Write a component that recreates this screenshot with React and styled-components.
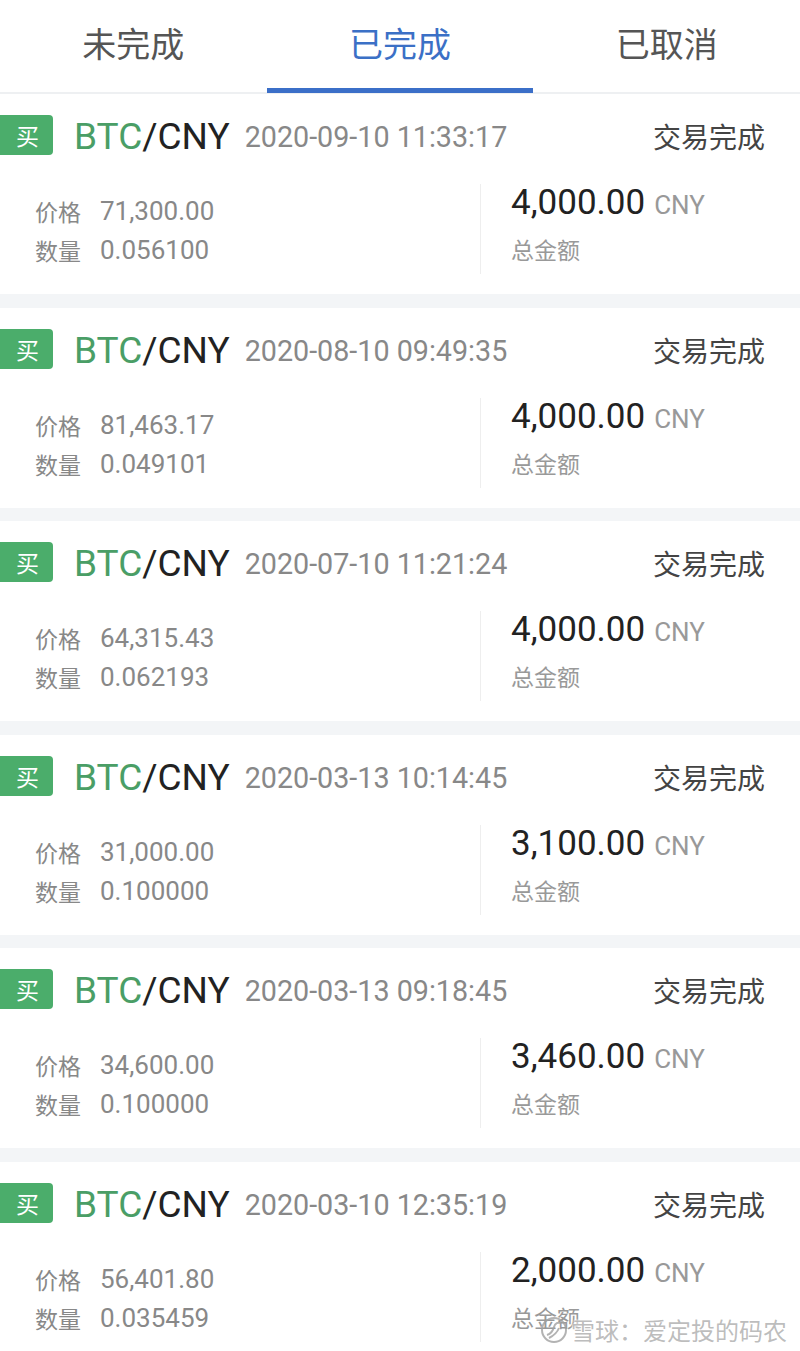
import React from "react";
import styled, { createGlobalStyle } from "styled-components";

const Global = createGlobalStyle`
  html, body { margin: 0; padding: 0; background: #ffffff; }
  body { font-family: Roboto, "Noto Sans CJK SC", sans-serif; }
  * { box-sizing: border-box; }
`;

const Page = styled.div`
  width: 800px;
  height: 1351px;
  overflow: hidden;
  position: relative;
  background: #f3f5f7;
`;

const Tabs = styled.div`
  display: grid;
  grid-template-columns: repeat(3, 1fr);
  height: 94px;
  background: #fff;
  border-bottom: 2px solid #eef0f2;
`;

const Tab = styled.div`
  position: relative;
  display: flex;
  justify-content: center;
  padding-top: 21px;
  font-family: "Noto Sans CJK SC", sans-serif;
  font-size: 34px;
  line-height: 44px;
  color: ${(p) => (p.$active ? "#3b70c6" : "#555555")};
  border-bottom: 5px solid ${(p) => (p.$active ? "#3b6fc8" : "transparent")};
  margin-bottom: -1px;
`;

const List = styled.div`
  display: flex;
  flex-direction: column;
  gap: 13.5px;
`;

const Card = styled.div`
  background: #fff;
  height: 200px;
  padding-top: 21px;
  display: flex;
  flex-direction: column;
`;

const Header = styled.div`
  display: flex;
  align-items: center;
  height: 40px;
  padding-right: 35px;
`;

const Badge = styled.div`
  width: 53px;
  height: 40px;
  background: #4bad6b;
  border-radius: 0 4px 4px 0;
  color: #fff;
  font-family: "Noto Sans CJK SC", sans-serif;
  font-size: 23px;
  display: flex;
  align-items: center;
  justify-content: center;
  padding-left: 2px;
`;

const Pair = styled.div`
  margin-left: 21px;
  font-family: Roboto, sans-serif;
  font-size: 37px;
  color: #222;
  line-height: 40px;
  padding-top: 4px;
`;

const Base = styled.span`
  color: #4a9e66;
`;

const DateText = styled.div`
  margin-left: 15px;
  font-family: Roboto, sans-serif;
  font-size: 28.7px;
  color: #888;
  line-height: 40px;
  padding-top: 4px;
`;

const Status = styled.div`
  margin-left: auto;
  font-family: "Noto Sans CJK SC", sans-serif;
  font-size: 28px;
  color: #444;
  line-height: 40px;
  padding-top: 2px;
`;

const Body = styled.div`
  display: flex;
  margin-top: 29px;
  height: 90px;
`;

const Left = styled.div`
  width: 481px;
  padding-left: 35px;
  padding-top: 7.5px;
  border-right: 1px solid #eeeeee;
`;

const Row = styled.div`
  display: flex;
  align-items: center;
  height: 39px;
`;

const Label = styled.span`
  width: 65px;
  font-family: "Noto Sans CJK SC", sans-serif;
  font-size: 23px;
  color: #888;
`;

const Value = styled.span`
  font-family: Roboto, sans-serif;
  font-size: 26px;
  color: #888;
`;

const Right = styled.div`
  padding-left: 30px;
  display: flex;
  flex-direction: column;
`;

const Amount = styled.div`
  height: 40px;
  display: flex;
  align-items: baseline;
  font-family: Roboto, sans-serif;
  line-height: 40px;
  margin-top: -1px;
`;

const AmountNum = styled.span`
  font-size: 35px;
  color: #222;
`;

const Unit = styled.span`
  font-size: 26px;
  color: #999;
  margin-left: 9px;
`;

const Total = styled.div`
  margin-top: 6px;
  height: 40px;
  line-height: 40px;
  font-family: "Noto Sans CJK SC", sans-serif;
  font-size: 23px;
  color: #999;
`;

const Watermark = styled.div`
  position: absolute;
  left: 540px;
  top: 1312px;
  display: flex;
  align-items: center;
  gap: 3px;
  font-family: "Noto Sans CJK SC", sans-serif;
  font-size: 24px;
  color: rgba(160, 160, 160, 0.7);
  text-shadow: 0 0 2px #fff, 0 0 2px #fff;
`;

const orders = [
  { date: "2020-09-10 11:33:17", price: "71,300.00", qty: "0.056100", amount: "4,000.00" },
  { date: "2020-08-10 09:49:35", price: "81,463.17", qty: "0.049101", amount: "4,000.00" },
  { date: "2020-07-10 11:21:24", price: "64,315.43", qty: "0.062193", amount: "4,000.00" },
  { date: "2020-03-13 10:14:45", price: "31,000.00", qty: "0.100000", amount: "3,100.00" },
  { date: "2020-03-13 09:18:45", price: "34,600.00", qty: "0.100000", amount: "3,460.00" },
  { date: "2020-03-10 12:35:19", price: "56,401.80", qty: "0.035459", amount: "2,000.00" },
];

export default function App() {
  return (
    <>
      <Global />
      <Page>
        <Tabs>
          <Tab>未完成</Tab>
          <Tab $active>已完成</Tab>
          <Tab>已取消</Tab>
        </Tabs>
        <List>
          {orders.map((o, i) => (
            <Card key={i}>
              <Header>
                <Badge>买</Badge>
                <Pair>
                  <Base>BTC</Base>/CNY
                </Pair>
                <DateText>{o.date}</DateText>
                <Status>交易完成</Status>
              </Header>
              <Body>
                <Left>
                  <Row>
                    <Label>价格</Label>
                    <Value>{o.price}</Value>
                  </Row>
                  <Row>
                    <Label>数量</Label>
                    <Value>{o.qty}</Value>
                  </Row>
                </Left>
                <Right>
                  <Amount>
                    <AmountNum>{o.amount}</AmountNum>
                    <Unit>CNY</Unit>
                  </Amount>
                  <Total>总金额</Total>
                </Right>
              </Body>
            </Card>
          ))}
        </List>
        <Watermark>
          <svg width="28" height="28" viewBox="0 0 28 28" fill="none" stroke="rgba(160,160,160,0.8)" strokeWidth="2">
            <circle cx="14" cy="14" r="12" />
            <path d="M7 19c3-1 6-4 7-8s4-5 7-4" />
            <path d="M9 22c4-2 8-5 10-10" />
          </svg>
          <span>雪球：爱定投的码农</span>
        </Watermark>
      </Page>
    </>
  );
}
